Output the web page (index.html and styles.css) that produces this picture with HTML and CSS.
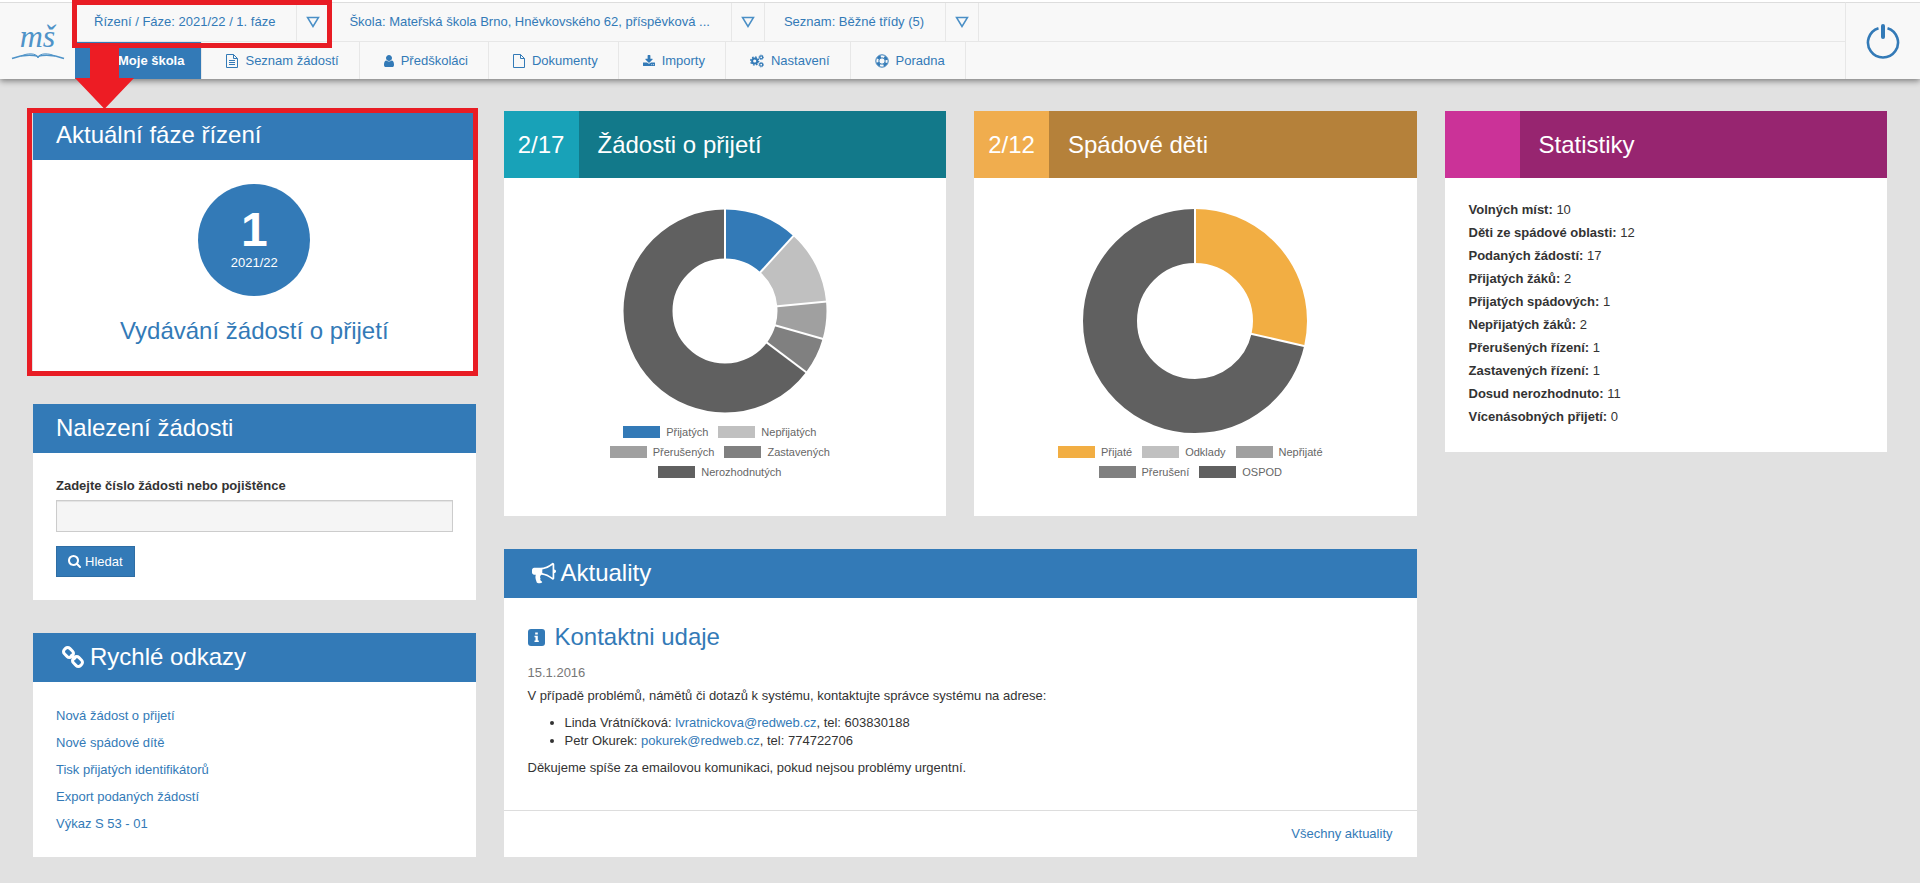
FILE: index.html
```html
<!DOCTYPE html>
<html lang="cs">
<head>
<meta charset="utf-8">
<meta name="viewport" content="width=device-width, initial-scale=1">
<title>Moje škola</title>
<link rel="stylesheet" href="styles.css">
</head>
<body>
<header class="topbar">
  <a class="logo" href="#" aria-label="mš">
    <span class="logo-text">mš</span>
    <svg class="logo-book" viewBox="0 0 54 8" aria-hidden="true"><path d="M1 6.500C9 3.500 18 3 23 3.500c3 .3 4 1.500 4 2.500 0-1 1-2.200 4-2.500 5-.5 14 0 22 3" fill="none" stroke="currentColor" stroke-width="1.500"/><path d="M10 4C16 1 25 1 27 5 29 1 38 1 44 4" fill="none" stroke="currentColor"/></svg>
  </a>
  <div class="bars">
    <div class="context">
      <a class="context-item" href="#">Řízení / Fáze: 2021/22 / 1. fáze</a>
      <button class="caret" type="button" aria-label="Vybrat řízení"><svg viewBox="0 0 14 12"><path d="M1.500 1.500h11L7 10.500z"/></svg></button>
      <a class="context-item" href="#">Škola: Mateřská škola Brno, Hněvkovského 62, příspěvková ...</a>
      <button class="caret" type="button" aria-label="Vybrat školu"><svg viewBox="0 0 14 12"><path d="M1.500 1.500h11L7 10.500z"/></svg></button>
      <a class="context-item" href="#">Seznam: Běžné třídy (5)</a>
      <button class="caret" type="button" aria-label="Vybrat seznam"><svg viewBox="0 0 14 12"><path d="M1.500 1.500h11L7 10.500z"/></svg></button>
      <div class="mark mark-phase"></div>
    </div>
    <nav class="menu">
      <a class="menu-item active" href="#"><svg class="w12" viewBox="0 0 12 14"><path fill="currentColor" d="M6 1l6 6h-2v5H7V9H5v3H2V7H0z"/></svg>Moje škola</a>
      <a class="menu-item" href="#"><svg class="w12" viewBox="0 0 12 14"><path d="M.5.5h7l4 4v9H.5zM7.500.5v4h4M3 6.500h6M3 8.500h6M3 10.500h6" fill="none" stroke="currentColor"/></svg>Seznam žádostí</a>
      <a class="menu-item" href="#"><svg class="w10" viewBox="256 64 1280 1664"><path fill="currentColor" d="M1536 1399q0 109-62.500 187t-150.500 78h-854q-88 0-150.500-78t-62.500-187q0-85 8.500-160.500t31.500-152 58.500-131 94-89 134.500-34.500q131 128 313 128t313-128q76 0 134.500 34.500t94 89 58.500 131 31.500 152 8.500 160.500zm-256-887q0 159-112.500 271.500t-271.500 112.500-271.500-112.500-112.500-271.500 112.500-271.500 271.500-112.500 271.500 112.500 112.500 271.500z"/></svg>Předškoláci</a>
      <a class="menu-item" href="#"><svg class="w12" viewBox="0 0 12 14"><path d="M.5.5h7l4 4v9H.5zM7.500.5v4h4" fill="none" stroke="currentColor"/></svg>Dokumenty</a>
      <a class="menu-item" href="#"><svg class="w12" viewBox="64 0 1664 1664"><path fill="currentColor" d="M1344 1344q0-26-19-45t-45-19-45 19-19 45 19 45 45 19 45-19 19-45zm256 0q0-26-19-45t-45-19-45 19-19 45 19 45 45 19 45-19 19-45zm128-224v320q0 40-28 68t-68 28h-1472q-40 0-68-28t-28-68v-320q0-40 28-68t68-28h465l135 136q58 56 136 56t136-56l136-136h464q40 0 68 28t28 68zm-325-569q17 41-14 70l-448 448q-18 19-45 19t-45-19l-448-448q-31-29-14-70 17-39 59-39h256v-448q0-26 19-45t45-19h256q26 0 45 19t19 45v448h256q42 0 59 39z"/></svg>Importy</a>
      <a class="menu-item" href="#"><svg class="w14" viewBox="0 0 14 14" fill="none" stroke="currentColor"><circle cx="4.700" cy="7" r="2.600" stroke-width="2"/><circle cx="4.700" cy="7" r="4" stroke-width="1.400" stroke-dasharray="1.600 1.540"/><circle cx="11.200" cy="3.300" r="1.500" stroke-width="1.200"/><circle cx="11.200" cy="3.300" r="2.300" stroke-width=".8" stroke-dasharray="1 .8"/><circle cx="11.200" cy="10.700" r="1.500" stroke-width="1.200"/><circle cx="11.200" cy="10.700" r="2.300" stroke-width=".8" stroke-dasharray="1 .8"/></svg>Nastavení</a>
      <a class="menu-item" href="#"><svg class="w14" viewBox="0 0 14 14" fill="none" stroke="currentColor"><circle cx="7" cy="7" r="6.200"/><circle cx="7" cy="7" r="3.200"/><circle cx="7" cy="7" r="4.700" stroke-width="2.600" stroke-dasharray="3.690 3.690" stroke-dashoffset="-1.850"/></svg>Poradna</a>
    </nav>
  </div>
  <a class="logout" href="#" aria-label="Odhlásit"><svg viewBox="0 0 34 36" fill="none" stroke="currentColor"><path d="M12.500 5.200a15 15 0 1 0 9 0" stroke-width="2.600"/><path d="M17 3v11" stroke-width="4" stroke-linecap="round"/></svg></a>
  <svg class="mark-arrow" viewBox="0 0 60 64" aria-hidden="true"><path d="M15 0h29v32h15L29.500 63 0 32h15z" fill="#ed1c24"/></svg>
</header>

<main class="board">
  <div class="column">
    <section class="panel phase">
      <h2 class="panel-title">Aktuální fáze řízení</h2>
      <div class="phase-body">
        <div class="phase-circle"><strong>1</strong><span>2021/22</span></div>
        <a class="headline" href="#">Vydávání žádostí o přijetí</a>
      </div>
      <div class="mark mark-panel"></div>
    </section>

    <section class="panel">
      <h2 class="panel-title">Nalezení žádosti</h2>
      <form class="search">
        <label for="code">Zadejte číslo žádosti nebo pojištěnce</label>
        <input id="code" type="text">
        <button type="button"><svg viewBox="64 128 1664 1664"><path fill="currentColor" d="M1216 832q0-185-131.500-316.500t-316.500-131.500-316.500 131.500-131.500 316.500 131.500 316.500 316.500 131.500 316.500-131.500 131.500-316.500zm512 832q0 52-38 90t-90 38q-54 0-90-38l-343-342q-179 124-399 124-143 0-273.500-55.500t-225-150-150-225-55.500-273.500 55.500-273.500 150-225 225-150 273.500-55.500 273.500 55.500 225 150 150 225 55.500 273.500q0 220-124 399l343 343q37 37 37 90z"/></svg>Hledat</button>
      </form>
    </section>

    <section class="panel">
      <h2 class="panel-title with-icon"><svg viewBox="0 0 24 24" fill="none" stroke="currentColor" stroke-width="3"><rect x="-5" y="-3.800" width="10" height="7.600" rx="3" transform="translate(7.500 7.500) rotate(45)"/><rect x="-5" y="-3.800" width="10" height="7.600" rx="3" transform="translate(16.500 16.500) rotate(45)"/><path d="M9.500 9.500l5 5"/></svg>Rychlé odkazy</h2>
      <ul class="links">
        <li><a href="#">Nová žádost o přijetí</a></li>
        <li><a href="#">Nové spádové dítě</a></li>
        <li><a href="#">Tisk přijatých identifikátorů</a></li>
        <li><a href="#">Export podaných žádostí</a></li>
        <li><a href="#">Výkaz S 53 - 01</a></li>
      </ul>
    </section>
  </div>

  <div class="column center">
    <div class="charts">
      <section class="panel">
        <h2 class="stat-title teal"><span class="count">2/17</span><span class="name">Žádosti o přijetí</span></h2>
        <div class="chart">
          <svg class="donut-small" viewBox="-102 -102 204 204" role="img" aria-label="Žádosti o přijetí">
            <g fill="none" stroke-width="49" transform="rotate(-90)">
              <circle r="77" pathLength="17" stroke="#337ab7" stroke-dasharray="2 15"/>
              <circle r="77" pathLength="17" stroke="#c0c0c0" stroke-dasharray="2 15" stroke-dashoffset="-2"/>
              <circle r="77" pathLength="17" stroke="#a0a0a0" stroke-dasharray="1 16" stroke-dashoffset="-4"/>
              <circle r="77" pathLength="17" stroke="#808080" stroke-dasharray="1 16" stroke-dashoffset="-5"/>
              <circle r="77" pathLength="17" stroke="#606060" stroke-dasharray="11 6" stroke-dashoffset="-6"/>
            </g>
            <g stroke="#fff" stroke-width="2">
              <path d="M0-50V-103"/>
              <path d="M0-50V-103" transform="rotate(42.350)"/>
              <path d="M0-50V-103" transform="rotate(84.710)"/>
              <path d="M0-50V-103" transform="rotate(105.880)"/>
              <path d="M0-50V-103" transform="rotate(127.060)"/>
            </g>
          </svg>
          <ul class="legend">
            <li><i class="c-blue"></i>Přijatých</li>
            <li><i class="c-g1"></i>Nepřijatých</li>
            <li><i class="c-g2"></i>Přerušených</li>
            <li><i class="c-g3"></i>Zastavených</li>
            <li><i class="c-g4"></i>Nerozhodnutých</li>
          </ul>
        </div>
      </section>
      <section class="panel">
        <h2 class="stat-title amber"><span class="count">2/12</span><span class="name">Spádové děti</span></h2>
        <div class="chart">
          <svg class="donut-large" viewBox="-112 -112 224 224" role="img" aria-label="Spádové děti">
            <g fill="none" stroke-width="54" transform="rotate(-90)">
              <circle r="85" pathLength="7" stroke="#f2ae43" stroke-dasharray="2 5"/>
              <circle r="85" pathLength="7" stroke="#606060" stroke-dasharray="5 2" stroke-dashoffset="-2"/>
            </g>
            <g stroke="#fff" stroke-width="2">
              <path d="M0-56V-113"/>
              <path d="M0-56V-113" transform="rotate(102.860)"/>
            </g>
          </svg>
          <ul class="legend">
            <li><i class="c-amber"></i>Přijaté</li>
            <li><i class="c-g1"></i>Odklady</li>
            <li><i class="c-g2"></i>Nepřijaté</li>
            <li><i class="c-g3"></i>Přerušení</li>
            <li><i class="c-g4"></i>OSPOD</li>
          </ul>
        </div>
      </section>
    </div>

    <section class="panel">
      <h2 class="panel-title with-icon"><svg viewBox="0 0 1792 1792"><path fill="currentColor" d="M1664 640q53 0 90.500 37.500t37.500 90.500-37.500 90.500-90.500 37.500v384q0 52-38 90t-90 38q-417-347-812-380-58 19-91 66t-31 100.500 40 92.500q-20 33-23 65.500t6 58 33.500 55 48 50 61.500 50.500q-29 58-111.500 83t-168.500 11.500-132-55.500q-7-23-29.500-87.500t-32-94.500-23-89-15-101 3.500-98.500 22-110.500h-122q-66 0-113-47t-47-113v-192q0-66 47-113t113-47h480q435 0 896-384 52 0 90 38t38 90v384zm-128 604v-954q-394 302-768 343v270q377 42 768 341z"/></svg>Aktuality</h2>
      <article class="news">
        <h3 class="headline"><svg viewBox="0 0 17 17" aria-hidden="true"><rect width="17" height="17" rx="3" fill="currentColor"/><path d="M7.200 3.500h2.600v2H7.200zM6.500 6.800h3.300v4.700h1v1.500H6.500v-1.500h1V8.300h-1z" fill="#fff"/></svg><a href="#">Kontaktni udaje</a></h3>
        <time datetime="2016-01-15">15.1.2016</time>
        <p>V případě problémů, námětů či dotazů k systému, kontaktujte správce systému na adrese:</p>
        <ul>
          <li>Linda Vrátníčková: <a href="#">lvratnickova@redweb.cz</a>, tel: 603830188</li>
          <li>Petr Okurek: <a href="#">pokurek@redweb.cz</a>, tel: 774722706</li>
        </ul>
        <p>Děkujeme spíše za emailovou komunikaci, pokud nejsou problémy urgentní.</p>
      </article>
      <footer class="news-more"><a href="#">Všechny aktuality</a></footer>
    </section>
  </div>

  <div class="column">
    <section class="panel">
      <h2 class="stat-title magenta"><span class="count"></span><span class="name">Statistiky</span></h2>
      <ul class="stats">
        <li><b>Volných míst:</b> 10</li>
        <li><b>Děti ze spádové oblasti:</b> 12</li>
        <li><b>Podaných žádostí:</b> 17</li>
        <li><b>Přijatých žáků:</b> 2</li>
        <li><b>Přijatých spádových:</b> 1</li>
        <li><b>Nepřijatých žáků:</b> 2</li>
        <li><b>Přerušených řízení:</b> 1</li>
        <li><b>Zastavených řízení:</b> 1</li>
        <li><b>Dosud nerozhodnuto:</b> 11</li>
        <li><b>Vícenásobných přijetí:</b> 0</li>
      </ul>
    </section>
  </div>
</main>
</body>
</html>
```
FILE: styles.css
```css
* { box-sizing: border-box; }

body {
  margin: 0;
  background: #e1e1e1;
  color: #333;
  font: 13px/18px "Liberation Sans", Arial, sans-serif;
}

a { color: #337ab7; text-decoration: none; }
h2, h3, p, ul { margin: 0; padding: 0; font-weight: normal; }
ul { list-style: none; }
svg { display: block; flex: none; }
button { font: inherit; cursor: pointer; }

/* Top bar */
.topbar {
  position: relative;
  z-index: 1;
  display: flex;
  background: #f8f8f8;
  border-top: 2px solid #fff;
  box-shadow: 0 2px 6px rgba(0, 0, 0, .45);
}

.logo {
  width: 75px;
  border-top: 1px solid #ddd;
  display: flex;
  flex-direction: column;
  align-items: center;
  padding-top: 17px;
  color: #4f93c8;
}
.logo-text { font: italic 32px/32px "Liberation Serif", "Times New Roman", serif; }
.logo-book { width: 54px; height: 8px; }

.bars { flex: 1; }

.context {
  position: relative;
  display: flex;
  height: 40px;
  border-top: 1px solid #ddd;
  border-bottom: 1px solid #e7e7e7;
}
.context-item {
  padding: 10px 21px 10px 19px;
  border-right: 1px solid #e7e7e7;
}
.caret {
  width: 33px;
  padding: 0 9px;
  border: 0;
  border-right: 1px solid #e7e7e7;
  background: none;
}
.caret svg { width: 14px; height: 12px; fill: none; stroke: #4a8fc6; stroke-width: 1.5; }

.menu { display: flex; height: 37px; }
.menu-item {
  display: flex;
  align-items: center;
  gap: 7px;
  padding: 0 20px 0 24px;
  border-right: 1px solid #e7e7e7;
}
.menu-item.active {
  padding-right: 17px;
  background: #337ab7;
  color: #fff;
  font-weight: bold;
}
.menu-item svg { height: 14px; }
.w10 { width: 10px; }
.w12 { width: 12px; }
.w14 { width: 14px; }

.logout {
  width: 75px;
  display: flex;
  align-items: center;
  justify-content: center;
  border-top: 1px solid #ddd;
  border-left: 1px solid #e7e7e7;
}
.logout svg { width: 34px; height: 36px; }

/* Red highlights lying over the page */
.mark { position: absolute; border: 5px solid #e81c24; pointer-events: none; }
.mark-phase { left: -3px; top: -3px; width: 260px; height: 48px; }
.mark-panel { left: -6px; right: -2px; top: -3px; bottom: -5px; }
.mark-arrow { position: absolute; left: 75px; top: 44px; width: 60px; height: 64px; }

/* Board */
.board {
  display: grid;
  grid-template-columns: repeat(4, minmax(0, 1fr));
  align-items: start;
  gap: 28px;
  padding: 32px 33px 26px;
}
.column { display: flex; flex-direction: column; gap: 33px; }
.center { grid-column: span 2; }
.charts { display: grid; grid-template-columns: 1fr 1fr; gap: 28px; }

.panel { position: relative; background: #fff; }
.panel-title {
  padding: 11px 23px 12px;
  background: #337ab7;
  color: #fff;
  font-size: 24px;
  line-height: 26px;
}
.with-icon { display: flex; align-items: center; gap: 5px; padding-left: 28px; }
.with-icon svg { width: 24px; height: 24px; }

.phase-body {
  display: flex;
  flex-direction: column;
  align-items: center;
  gap: 22px;
  padding: 24px 23px 27px;
}
.phase-circle {
  width: 112px;
  height: 112px;
  padding-top: 22px;
  border-radius: 50%;
  background: #337ab7;
  color: #fff;
  text-align: center;
}
.phase-circle strong { display: block; font-size: 48px; line-height: 48px; }
.phase-circle span { display: block; }
.headline { color: #337ab7; font-size: 24px; line-height: 26px; }

.search { display: flex; flex-direction: column; align-items: flex-start; padding: 24px 23px 23px; }
.search label { margin-bottom: 5px; font-weight: bold; }
.search input {
  width: 100%;
  height: 32px;
  margin-bottom: 14px;
  padding: 6px 12px;
  border: 1px solid #ccc;
  background: #f5f5f5;
  font: inherit;
  box-shadow: inset 0 1px 1px rgba(0, 0, 0, .075);
}
.search button {
  display: flex;
  align-items: center;
  gap: 4px;
  height: 31px;
  padding: 0 11px;
  border: 1px solid #2e6da4;
  background: #337ab7;
  color: #fff;
}
.search button svg { width: 13px; height: 13px; }

.links { padding: 20px 23px; line-height: 27px; }

/* Panels with a counter */
.stat-title { display: flex; color: #fff; font-size: 24px; line-height: 67px; }
.count { width: 75px; text-align: center; }
.name { flex: 1; padding-left: 19px; }
.teal { background: #12798a; }
.teal .count { background: #18a2b8; }
.amber { background: #b5813a; }
.amber .count { background: #f0ad4e; }
.magenta { background: #972570; }
.magenta .count { background: #cb3298; }

.chart { display: flex; flex-direction: column; align-items: center; gap: 9px; padding: 31px 0 34px; }
.donut-small { width: 204px; height: 204px; }
.donut-large { width: 224px; height: 224px; }
.legend {
  display: flex;
  flex-wrap: wrap;
  justify-content: center;
  max-width: 300px;
  color: #666;
  font-size: 11px;
  line-height: 20px;
}
.legend li { display: flex; align-items: center; gap: 6px; padding-right: 10px; }
.legend i { width: 37px; height: 12px; }
.c-blue { background: #337ab7; }
.c-amber { background: #f2ae43; }
.c-g1 { background: #c0c0c0; }
.c-g2 { background: #a0a0a0; }
.c-g3 { background: #808080; }
.c-g4 { background: #606060; }

/* News */
.news { padding: 26px 24px 24px; }
.news .headline { display: flex; align-items: center; gap: 10px; margin-bottom: 14px; }
.news .headline svg { width: 17px; height: 17px; }
.news time { display: block; margin-bottom: 5px; color: #777; }
.news p { margin-bottom: 9px; }
.news ul { margin-bottom: 9px; padding-left: 37px; list-style: disc; }
.news-more { padding: 14px 24px; border-top: 1px solid #ddd; text-align: right; }

.stats { padding: 20px 24px 24px; line-height: 23px; }
```
